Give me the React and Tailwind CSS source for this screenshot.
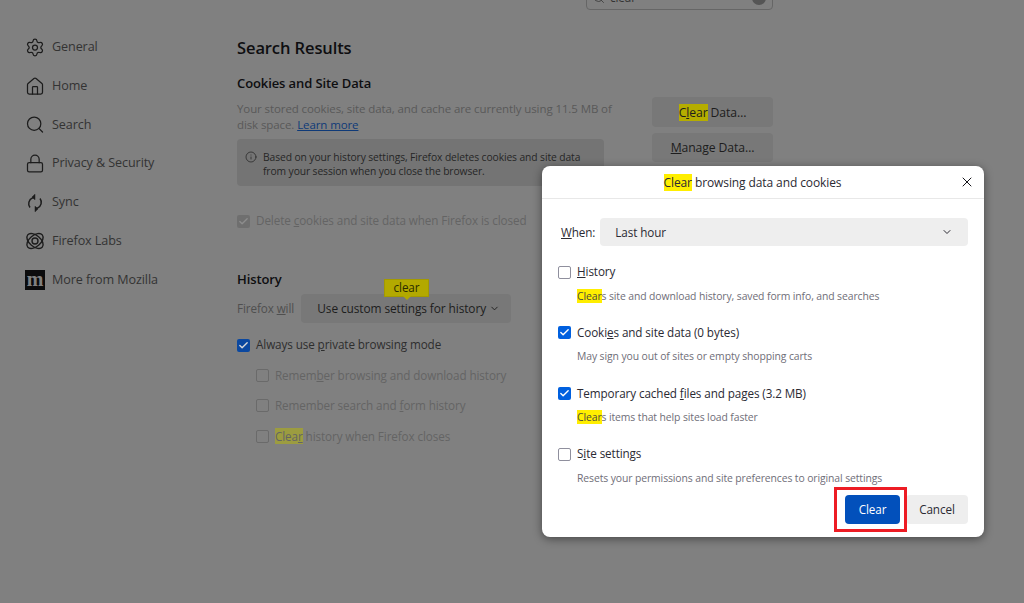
import { Settings, House, Search, Lock, Info, ChevronDown, X, Check } from "lucide-react";

const navItems = [
  { label: "General", icon: <Settings size={21} strokeWidth={1.5} /> },
  { label: "Home", icon: <House size={21} strokeWidth={1.5} /> },
  { label: "Search", icon: <Search size={21} strokeWidth={1.5} /> },
  { label: "Privacy & Security", icon: <Lock size={21} strokeWidth={1.5} /> },
  { label: "Sync", icon: <SyncIcon /> },
  { label: "Firefox Labs", icon: <LabsIcon /> },
  { label: "More from Mozilla", icon: <MozillaIcon /> },
];

function SyncIcon() {
  return (
    <svg width="20" height="20" viewBox="0 0 20 20" fill="none" stroke="currentColor" strokeWidth="1.5">
      <path d="M5 14.5a6.3 6.3 0 0 1 2.5-9.6l2.3-.6" />
      <path d="M15 5.5a6.3 6.3 0 0 1-2.5 9.6l-2.3.6" />
      <path d="M10 1.2v5.6L7 4z" fill="currentColor" strokeWidth="0.5" />
      <path d="M10 13.2v5.6l3-2.8z" fill="currentColor" strokeWidth="0.5" />
    </svg>
  );
}

function LabsIcon() {
  return (
    <svg width="20" height="20" viewBox="0 0 20 20" fill="none" stroke="currentColor" strokeWidth="1.4">
      <ellipse cx="10" cy="10" rx="9.5" ry="5.6" transform="rotate(40 10 10)" />
      <ellipse cx="10" cy="10" rx="9.5" ry="5.6" transform="rotate(-40 10 10)" />
      <circle cx="10" cy="10" r="3" />
    </svg>
  );
}

function MozillaIcon() {
  return (
    <span className="flex h-[20px] w-[20px] items-center justify-center bg-[#0c0c0d] pb-[3px] font-['Liberation_Serif',serif] text-[20px] font-bold leading-none text-[#808080]">
      m
    </span>
  );
}

function Mark({ children, faded }) {
  return <span className={faded ? "bg-[#9c9c40]" : "bg-[#b5ad00]"}>{children}</span>;
}

function DimCheck({ checked, disabled, className = "" }) {
  if (checked && disabled) {
    return (
      <span className={`flex h-[13px] w-[13px] shrink-0 items-center justify-center rounded-[2px] bg-[#6f6f6f] text-[#8d8d8d] ${className}`}>
        <Check size={11} strokeWidth={3} />
      </span>
    );
  }
  if (checked) {
    return (
      <span className={`flex h-[13px] w-[13px] shrink-0 items-center justify-center rounded-[2px] bg-[#0b48a0] text-[#d8d8d8] ${className}`}>
        <Check size={11} strokeWidth={3} />
      </span>
    );
  }
  return <span className={`h-[13px] w-[13px] shrink-0 rounded-[2px] border border-[#6a6a6a] ${className}`} />;
}

function SubOption({ children }) {
  return (
    <div className="flex h-[30.6px] items-center gap-[6px] pl-[19px] text-[#646464]">
      <DimCheck />
      <span>{children}</span>
    </div>
  );
}

function DialogOption({ checked, label, desc }) {
  return (
    <div>
      <div className="flex h-[20px] items-center gap-[6px] text-[#2b2a33]">
        {checked ? (
          <span className="flex h-[13px] w-[13px] items-center justify-center rounded-[2px] bg-[#0060df] text-white">
            <Check size={11} strokeWidth={3} />
          </span>
        ) : (
          <span className="h-[13px] w-[13px] rounded-[2px] border border-[#8f8f9d]" />
        )}
        <span>{label}</span>
      </div>
      <p className="mt-[3.5px] pl-[19px] text-[10.4px] leading-[20px] text-[#6f6e78]">{desc}</p>
    </div>
  );
}

export default function App() {
  return (
    <div className="relative h-[603px] w-[1024px] overflow-hidden bg-[#808080] font-['Open_Sans',sans-serif] text-[11.7px] tracking-[-0.1px] text-[#2e2e2e]">
      <div className="flex h-full">
        <nav className="w-[237px] pl-[25px] pt-[28px] text-[12.6px]">
          {navItems.map((item) => (
            <div key={item.label} className="flex h-[38.8px] items-center gap-[7px] text-[#333333]">
              <span className="flex w-[20px] justify-center text-[#1c1c1c]">{item.icon}</span>
              <span>{item.label}</span>
            </div>
          ))}
        </nav>

        <main className="w-[536px]">
          <div className="flex h-[10px] justify-end">
            <div className="-mt-[14px] flex h-[24px] w-[187px] shrink-0 items-center justify-between rounded-[4px] border border-[#666666] pl-[6px] pr-[6px] text-[#333333]">
              <span className="flex items-center gap-[5px]">
                <Search size={12} strokeWidth={1.5} />
                <span>clear</span>
              </span>
              <span className="h-[14px] w-[14px] rounded-full bg-[#555555]" />
            </div>
          </div>

          <h1 className="mt-[26px] text-[16.5px] font-semibold leading-[24px] text-[#0e0e10]">Search Results</h1>

          <div className="mt-[14px] flex justify-between">
            <div className="w-[378px]">
              <h2 className="text-[13px] font-semibold leading-[18px] text-[#0e0e10]">Cookies and Site Data</h2>
              <p className="mt-[9px] text-[11.5px] leading-[16px] text-[#595959]">
                Your stored cookies, site data, and cache are currently using 11.5 MB of<br />
                disk space.{" "}
                <span className="text-[#0f3a78] underline">Learn more</span>
              </p>
              <div className="mt-[6px] flex h-[47px] w-[367px] gap-[6px] rounded-[4px] bg-[#747474] pl-[8px] pt-[11px] text-[10.3px] leading-[14px] text-[#262626]">
                <Info size={12} strokeWidth={1.5} className="mt-[1px] shrink-0" />
                <p>
                  Based on your history settings, Firefox deletes cookies and site data from your session when you close the browser.
                </p>
              </div>
            </div>
            <div className="flex w-[121px] flex-col gap-[6px] pt-[23px] text-[12.2px]">
              <button className="h-[30px] rounded-[4px] bg-[#787878] pt-[2px] text-[#1d1d1d]">
                <Mark>C<u>l</u>ear</Mark> Data…
              </button>
              <button className="h-[29px] rounded-[4px] bg-[#787878] pt-[1px] text-[#1d1d1d]">
                <u>M</u>anage Data…
              </button>
            </div>
          </div>

          <div className="mt-[25px] flex h-[20px] items-center gap-[6px] text-[#646464]">
            <DimCheck checked disabled />
            <span>Delete <u>c</u>ookies and site data when Firefox is closed</span>
          </div>

          <h2 className="mt-[39px] text-[13px] font-semibold leading-[18px] text-[#0e0e10]">History</h2>
          <div className="relative mt-[6px] flex items-center gap-[7px]">
            <span className="text-[#4f4f4f]">Firefox <u>w</u>ill</span>
            <div className="flex h-[29px] w-[210px] items-center justify-center gap-[3px] rounded-[4px] bg-[#787878] pl-[5px] text-[11.9px] text-[#1d1d1d]">
              <span>Use custom settings for history</span>
              <ChevronDown size={11} />
            </div>
            <div className="absolute left-[147px] top-[-15px] flex h-[18px] w-[45px] items-center justify-center border border-[#a39a00] bg-[#b3a900] text-[#2b2b00]">
              clear
              <span className="absolute bottom-[-4px] left-[18px] h-0 w-0 border-x-[4px] border-t-[4px] border-x-transparent border-t-[#b3a900]" />
            </div>
          </div>

          <div className="mt-[12px] flex h-[20px] items-center gap-[6px] text-[#2e2e2e]">
            <DimCheck checked />
            <span>Always use <u>p</u>rivate browsing mode</span>
          </div>
          <div className="mt-[5px]">
            <SubOption>Remem<u>b</u>er browsing and download history</SubOption>
            <SubOption>Remember search and <u>f</u>orm history</SubOption>
            <SubOption>
              <Mark faded>Clea<u>r</u></Mark> history when Firefox closes
            </SubOption>
          </div>
        </main>
      </div>

      {/* dialog sits over the dimmed page */}
      <div className="absolute left-[542px] top-[166px] h-[371px] w-[442px] rounded-[8px] bg-white text-[#2b2a33] shadow-[0_2px_10px_rgba(0,0,0,0.45)]">
        <div className="relative flex h-[33px] items-center justify-center border-b border-[#e8e8e8] pr-[21px] pt-[1px] text-[12px]">
          <span><span className="bg-[#ffee00]">Clear</span> browsing data and cookies</span>
          <X size={16} strokeWidth={1.5} className="absolute right-[9px] top-[8px] text-[#15141a]" />
        </div>

        <div className="flex items-center gap-[5px] pl-[19px] pr-[16px] pt-[19px]">
          <span className="pt-[1px]"><u>W</u>hen:</span>
          <div className="flex h-[28px] flex-1 items-center justify-between rounded-[4px] bg-[#eeeeee] pl-[15px] pr-[15px]">
            <span className="pt-[1px]">Last hour</span>
            <ChevronDown size={12} />
          </div>
        </div>

        <div className="flex flex-col gap-[17.2px] pl-[16px] pt-[16px]">
          <DialogOption
            label={<><u>H</u>istory</>}
            desc={<><span className="bg-[#ffee00] text-[#4b4a3c]">Clear</span>s site and download history, saved form info, and searches</>}
          />
          <DialogOption
            checked
            label={<>Cooki<u>e</u>s and site data (0 bytes)</>}
            desc="May sign you out of sites or empty shopping carts"
          />
          <DialogOption
            checked
            label={<>Temporary cached <u>f</u>iles and pages (3.2 MB)</>}
            desc={<><span className="bg-[#ffee00] text-[#4b4a3c]">Clear</span>s items that help sites load faster</>}
          />
          <DialogOption
            label={<>S<u>i</u>te settings</>}
            desc="Resets your permissions and site preferences to original settings"
          />
        </div>

        <div className="flex justify-end gap-[6px] pr-[16px] pt-[7.5px]">
          <button className="h-[29px] w-[55px] rounded-[4px] bg-[#0250bb] text-white">Clear</button>
          <button className="h-[29px] w-[62px] rounded-[4px] bg-[#eeeeee]">Cancel</button>
        </div>
      </div>

      {/* red callout drawn on the screenshot */}
      <div className="absolute left-[834px] top-[487px] h-[45px] w-[73px] border-[3px] border-[#ed1c24]" />
    </div>
  );
}
